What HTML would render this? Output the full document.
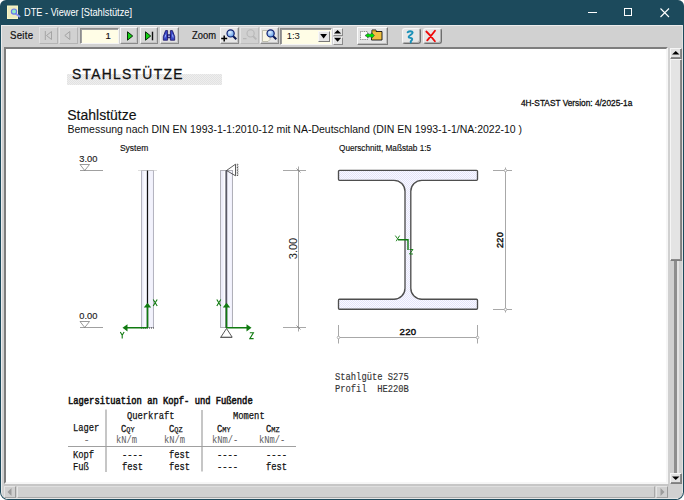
<!DOCTYPE html>
<html><head><meta charset="utf-8">
<style>
*{box-sizing:border-box}
html,body{margin:0;padding:0;width:684px;height:500px;overflow:hidden;background:#fff}
body{position:relative;font-family:"Liberation Sans",sans-serif}
.a{position:absolute}
.t{position:absolute;white-space:nowrap;line-height:1}
#win{position:absolute;left:0;top:0;width:684px;height:500px;background:#1c4a5c;border-radius:6px 6px 8px 8px;overflow:hidden}
.btn{position:absolute;background:#d6d6d6;border:1px solid;border-color:#f6f6f6 #8a8a8a #8a8a8a #f6f6f6;box-shadow:inset -1px -1px 0 #c4c4c4}
</style></head><body>
<div id="win">
<svg class="a" style="left:6px;top:5px" width="16" height="15" viewBox="0 0 16 15">
<rect x="1.5" y="1" width="10" height="12.5" fill="#ecebc0" stroke="#fbf7c4" stroke-width="1"/>
<line x1="9.5" y1="8.5" x2="13.5" y2="11.5" stroke="#8a96f4" stroke-width="2" stroke-linecap="round"/>
<circle cx="8" cy="6.6" r="2.6" fill="#90ecc8" stroke="#6a78ea" stroke-width="1.2"/>
</svg>
<div class="t" style="left:23.89px;top:8.27px;font-family:'Liberation Sans',sans-serif;font-size:10.2px;font-weight:normal;color:#fff;transform-origin:0 0;transform:scaleX(0.9050);">DTE - Viewer [Stahlstütze]</div>
<div class="a" style="left:588px;top:12px;width:9px;height:1px;background:#fff"></div>
<div class="a" style="left:624px;top:8px;width:8px;height:8px;border:1px solid #fff"></div>
<svg class="a" style="left:660px;top:8px" width="10" height="10" viewBox="0 0 10 10"><path d="M0.5 0.5L9 9M9 0.5L0.5 9" stroke="#fff" stroke-width="1.1"/></svg>
<div class="a" style="left:1px;top:25px;width:682px;height:474px;background:#d1d1d1;border-radius:0 0 7px 7px;border-top:1px solid #ececec;border-left:1px solid #ececec"></div>
<div class="t" style="left:10.19px;top:31.17px;font-family:'Liberation Sans',sans-serif;font-size:10.2px;font-weight:normal;color:#111;transform-origin:0 0;transform:scaleX(0.9500);letter-spacing:0.25px;-webkit-text-stroke:0.2px #111;">Seite</div>
<div class="btn" style="left:39px;top:27px;width:19px;height:17px;background:#d1d1d1;border-color:#e2e2e2 #b4b4b4 #b4b4b4 #e2e2e2;box-shadow:none"></div>
<div class="btn" style="left:59px;top:27px;width:19px;height:17px;background:#d1d1d1;border-color:#e2e2e2 #b4b4b4 #b4b4b4 #e2e2e2;box-shadow:none"></div>
<svg class="a" style="left:39px;top:27px" width="40" height="17"><path d="M6.3 4v9M12.5 4.5v8l-5-4z" fill="none" stroke="#a4a4a4" stroke-width="1"/><path d="M30.8 4.5v8l-5-4z" fill="none" stroke="#a4a4a4" stroke-width="1"/></svg>
<div class="a" style="left:80px;top:28px;width:39px;height:16px;background:#fffde6;border:1px solid;border-color:#8c8c8c #f4f4f4 #f4f4f4 #8c8c8c;box-shadow:inset 1px 1px 0 #a0a0a0"></div>
<div class="t" style="left:105.53px;top:30.56px;font-family:'Liberation Sans',sans-serif;font-size:9.5px;font-weight:normal;color:#111;-webkit-text-stroke:0.15px #111;">1</div>
<div class="btn" style="left:120px;top:27px;width:18px;height:17px"></div>
<div class="btn" style="left:140px;top:27px;width:18px;height:17px"></div>
<div class="btn" style="left:160px;top:27px;width:19px;height:17px;background:#e2e2e2"></div>
<svg class="a" style="left:120px;top:27px" width="60" height="17"><path d="M7.5 4.8v8.4l5.2-4.2z" fill="#10d010" stroke="#0a2a0a" stroke-width="1"/><path d="M25.5 4.8v8.4l5.2-4.2z" fill="#10d010" stroke="#0a2a0a" stroke-width="1"/><rect x="31.8" y="4.7" width="1.4" height="8.6" fill="#111"/><g stroke="#1a1060" stroke-width="0.8" stroke-linejoin="round"><path d="M43.3 13.2V9.6L45.6 3.6H47.6V13.2Z" fill="#3a48c8"/><path d="M50.4 13.2V3.6H52.4L54.7 9.6V13.2Z" fill="#3a48c8"/><path d="M47.6 7.8H50.4V10.8H47.6Z" fill="#2a30a0"/></g><path d="M45 10.5l0.8-3M52.5 7.5l0.6 3" stroke="#a8c0ff" stroke-width="0.9"/><circle cx="49" cy="9.3" r="0.7" fill="#fff"/></svg>
<div class="t" style="left:191.69px;top:30.67px;font-family:'Liberation Sans',sans-serif;font-size:10.2px;font-weight:normal;color:#111;transform-origin:0 0;transform:scaleX(0.9200);-webkit-text-stroke:0.2px #111;">Zoom</div>
<div class="btn" style="left:220px;top:27px;width:19px;height:17px;background:#e6e6e6"></div>
<div class="btn" style="left:260px;top:27px;width:19px;height:17px;background:#e6e6e6"></div>
<div class="btn" style="left:240px;top:27px;width:19px;height:17px;background:#d0d0d0;border-color:#e2e2e2 #bcbcbc #bcbcbc #e2e2e2;box-shadow:none"></div>
<svg class="a" style="left:220px;top:27px" width="60" height="17"><defs><radialGradient id="lens" cx="0.4" cy="0.35" r="0.7"><stop offset="0" stop-color="#e0f0ff"/><stop offset="1" stop-color="#5a9ae8"/></radialGradient></defs><path d="M1.2 11.6h6M4.2 8.6v6" stroke="#000" stroke-width="1.5"/><line x1="13" y1="9" x2="16.3" y2="12.3" stroke="#0a1850" stroke-width="2"/><circle cx="10.6" cy="6.4" r="3.6" fill="url(#lens)" stroke="#102070" stroke-width="1.2"/><path d="M23 11.6h3.5" stroke="#b8b8b8" stroke-width="1.2"/><line x1="33" y1="9" x2="36.3" y2="12.3" stroke="#b8b8b8" stroke-width="1.8"/><circle cx="30.6" cy="6.4" r="3.6" fill="none" stroke="#b8b8b8" stroke-width="1.1"/><path d="M42.5 3.5h7.5v9l-2 2h-5.5z" fill="#f8f6e4" stroke="#b0b0a0" stroke-width="0.8"/><line x1="53" y1="9" x2="56.3" y2="12.3" stroke="#0a1850" stroke-width="2"/><circle cx="50.6" cy="6.4" r="3.6" fill="url(#lens)" stroke="#102070" stroke-width="1.2"/></svg>
<div class="a" style="left:280px;top:28px;width:52px;height:17px;background:#fffde6;border:1px solid;border-color:#8a8a8a #f4f4f4 #f4f4f4 #8a8a8a;box-shadow:inset 1px 1px 0 #9a9a9a"></div>
<div class="t" style="left:286.63px;top:31.36px;font-family:'Liberation Sans',sans-serif;font-size:9.5px;font-weight:normal;color:#111;">1:3</div>
<div class="btn" style="left:318px;top:31px;width:12px;height:11px;background:#e6e6e6;border-color:#f8f8f8 #7a7a7a #7a7a7a #f8f8f8;box-shadow:none"></div>
<svg class="a" style="left:318px;top:31px" width="12" height="11"><path d="M2.2 3h6.8l-3.4 4.4z" fill="#000"/></svg>
<div class="btn" style="left:333px;top:28px;width:10px;height:8px;background:#e4e4e4;border-color:#f8f8f8 #8a8a8a #8a8a8a #f8f8f8;box-shadow:none"></div>
<div class="btn" style="left:333px;top:36.5px;width:10px;height:8px;background:#e4e4e4;border-color:#f8f8f8 #8a8a8a #8a8a8a #f8f8f8;box-shadow:none"></div>
<svg class="a" style="left:332px;top:28px" width="12" height="17"><path d="M2 5.6h7.2l-3.6-3.6z M2 9.8h7.2l-3.6 4z" fill="#000"/></svg>
<div class="btn" style="left:357px;top:27px;width:31px;height:17.5px;background:#e4e4e4;border-color:#fafafa #7a7a7a #7a7a7a #fafafa;box-shadow:inset -1px -1px 0 #bdbdbd"></div>
<svg class="a" style="left:357px;top:27px" width="31" height="18"><rect x="3.5" y="4.5" width="7" height="8" fill="#fbfbfb" stroke="#555" stroke-width="0.7" stroke-dasharray="1,0.8"/><path d="M15 3h4v1.5h6v8.5h-10.5z" fill="#f0c040" stroke="#111" stroke-width="0.9"/><path d="M15.2 3.2h3.6v1.2h-3.6z" fill="#a08020"/><path d="M8 8.5l3-2 2 1 2-1.5 2.5 2.5-2.5 2.5-2-1.5-2 1-3-2z" fill="#00e000" stroke="#302050" stroke-width="0.5"/></svg>
<div class="btn" style="left:402px;top:27.5px;width:18.5px;height:16px;border-radius:3px;background:#e6e6e6;border-color:#f6f6f6 #6e6e6e #6e6e6e #f6f6f6;box-shadow:inset -1px -1px 0 #b0b0b0"></div>
<div class="btn" style="left:423px;top:27.5px;width:18.5px;height:16px;border-radius:3px;background:#e6e6e6;border-color:#f6f6f6 #6e6e6e #6e6e6e #f6f6f6;box-shadow:inset -1px -1px 0 #b0b0b0"></div>
<svg class="a" style="left:398px;top:25px" width="46" height="21"><path d="M9.6 7.2c1.5-1.2 4.5-1.4 5 0.2s-4 3.3-4 4.6 3.8 0.4 3.6 2.2-2.2 1.7-1.4 3.3" fill="none" stroke="#1a90b8" stroke-width="1.9" stroke-linecap="round"/><path d="M28.3 6.5c3 2.8 6 6.2 8.6 9.8M37 5.8c-2.6 3.5-5.8 7.2-7.8 9.6" fill="none" stroke="#f00808" stroke-width="1.8" stroke-linecap="round"/></svg>
<div class="a" style="left:4px;top:47px;width:664px;height:437px;background:#fff;border:2px solid;border-color:#7e7e7e #f6f6f6 #f6f6f6 #7e7e7e"></div>
<div class="a" style="left:668px;top:47px;width:14px;height:437px;background:#d0d0d0"></div>
<div class="a" style="left:674px;top:260px;width:3px;height:213px;background:#8e8e8e"></div>
<div class="a" style="left:677px;top:260px;width:2px;height:213px;background:#e4e4e4"></div>
<div class="btn" style="left:669.5px;top:48px;width:12.5px;height:11px;background:#e2e2e2;border-color:#f6f6f6 #7e7e7e #7e7e7e #f6f6f6;box-shadow:inset -1px -1px 0 #8a8a8a"></div>
<div class="btn" style="left:669.5px;top:59px;width:12.5px;height:202px;background:#e4e4e4;border-color:#f6f6f6 #7e7e7e #7e7e7e #f6f6f6;box-shadow:inset -1px -1px 0 #8a8a8a"></div>
<div class="btn" style="left:669.5px;top:473px;width:12.5px;height:11px;background:#e2e2e2;border-color:#f6f6f6 #7e7e7e #7e7e7e #f6f6f6;box-shadow:inset -1px -1px 0 #8a8a8a"></div>
<svg class="a" style="left:670px;top:48px" width="12" height="11"><path d="M2 6.5h7.5l-3.75-3.5z" fill="#000"/></svg>
<svg class="a" style="left:670px;top:473px" width="12" height="11"><path d="M2 3.5h7.5l-3.75 3.5z" fill="#000"/></svg>
<div class="a" style="left:682px;top:25px;width:1px;height:468px;background:#e2e2e2"></div>
<div class="a" style="left:6px;top:498px;width:672px;height:1px;background:#e6e6e6"></div>
<div class="a" style="left:4px;top:484px;width:665px;height:14px;background:#d0d0d0"></div>
<div class="a" style="left:4px;top:484px;width:665px;height:2px;background:#c6c6c6"></div>
<div class="btn" style="left:4px;top:486px;width:12px;height:12px;background:#d0d0d0;border-color:#e4e4e4 #9a9a9a #a4a4a4 #e4e4e4;box-shadow:none"></div>
<div class="btn" style="left:17px;top:486px;width:638px;height:12px;background:#d0d0d0;border-color:#dedede #a8a8a8 #a8a8a8 #e6e6e6;box-shadow:none"></div>
<div class="btn" style="left:656px;top:486px;width:12px;height:12px;background:#d0d0d0;border-color:#e4e4e4 #9a9a9a #a4a4a4 #e4e4e4;box-shadow:none"></div>
<svg class="a" style="left:4px;top:486px" width="12" height="12"><path d="M3.5 6l4-4v8z" fill="#9c9c9c"/></svg>
<svg class="a" style="left:656px;top:486px" width="12" height="12"><path d="M8.5 6l-4-4v8z" fill="#9c9c9c"/></svg>
<svg class="a" style="left:0;top:0" width="684" height="500" viewBox="0 0 684 500"><defs><pattern id="dith" width="2" height="2" patternUnits="userSpaceOnUse"><rect width="2" height="2" fill="#fafaff"/><rect width="1" height="1" fill="#e4e4fa"/><rect x="1" y="1" width="1" height="1" fill="#e4e4fa"/></pattern><pattern id="gdith" width="2" height="2" patternUnits="userSpaceOnUse"><rect width="2" height="2" fill="#eeeeee"/><rect width="1" height="1" fill="#e2e2e2"/><rect x="1" y="1" width="1" height="1" fill="#e2e2e2"/></pattern></defs><rect x="67" y="74" width="155" height="11" fill="url(#gdith)"/><line x1="80" y1="170.5" x2="103" y2="170.5" stroke="#a0a0a0" stroke-width="1"/><path d="M80 164.5h9.5l-4.75 6z" fill="none" stroke="#707070" stroke-width="0.7"/><line x1="80" y1="327.5" x2="103" y2="327.5" stroke="#a0a0a0" stroke-width="1"/><path d="M80 321.5h9.5l-4.75 6z" fill="none" stroke="#707070" stroke-width="0.7"/><rect x="141.5" y="170.5" width="12" height="157" fill="#ebebf8" stroke="#b4b4c0" stroke-width="1"/><rect x="143.6" y="171" width="2.4" height="156" fill="#fafaff"/><rect x="148.2" y="171" width="4.5" height="156" fill="#f2f2fc"/><line x1="147.5" y1="170" x2="147.5" y2="328" stroke="#111" stroke-width="1.2"/><line x1="138" y1="170.5" x2="157" y2="170.5" stroke="#c8c8c8" stroke-width="0.6"/><line x1="141" y1="328" x2="154" y2="328" stroke="#333" stroke-width="1" stroke-dasharray="1,1"/><rect x="220.5" y="170.5" width="12" height="157" fill="#ededfa" stroke="#b0b0b8" stroke-width="1"/><rect x="223.6" y="171" width="1.6" height="156" fill="#fcfcff"/><rect x="228" y="171" width="3.5" height="156" fill="#f4f4fd"/><line x1="226.3" y1="170.5" x2="226.3" y2="328" stroke="#5a5a66" stroke-width="1.8"/><path d="M226.5 170.5L235.5 164.2V175.8z" fill="none" stroke="#333" stroke-width="0.8"/><line x1="237.3" y1="163.8" x2="237.3" y2="176.2" stroke="#333" stroke-width="1" stroke-dasharray="1,0.6"/><line x1="238.3" y1="164.3" x2="238.3" y2="176" stroke="#999" stroke-width="0.8" stroke-dasharray="0.8,0.9"/><path d="M226.5 328.5L220.8 337.2H232.2z" fill="#fff" stroke="#444" stroke-width="0.9"/><line x1="220.5" y1="337.5" x2="232.5" y2="337.5" stroke="#333" stroke-width="1" stroke-dasharray="1,1"/><line x1="147.5" y1="328" x2="147.5" y2="306" stroke="#107a10" stroke-width="1.6"/><path d="M143.8 307.5L147.5 302.8L151.2 307.5z" fill="#107a10"/><line x1="147.5" y1="327.8" x2="126" y2="327.8" stroke="#107a10" stroke-width="1.6"/><path d="M127.5 324.2L122.5 327.8L127.5 331.4z" fill="#107a10"/><line x1="226.5" y1="328" x2="226.5" y2="306" stroke="#107a10" stroke-width="1.6"/><path d="M222.8 307.5L226.5 302.8L230.2 307.5z" fill="#107a10"/><line x1="226.5" y1="327.8" x2="248" y2="327.8" stroke="#107a10" stroke-width="1.6"/><path d="M246.5 324.2L251.5 327.8L246.5 331.4z" fill="#107a10"/><path d="M153.2 299.5L157.2 306M157.2 299.5L153.2 306" stroke="#107a10" stroke-width="1.1" fill="none"/><path d="M120.3 332L122.2 335.2L124.1 332M122.2 335.2V338.5" stroke="#107a10" stroke-width="1.1" fill="none"/><path d="M216.8 299.5L220.8 306M220.8 299.5L216.8 306" stroke="#107a10" stroke-width="1.1" fill="none"/><path d="M249.8 332.8H253.4L249.8 338.6H253.6" stroke="#107a10" stroke-width="1.1" fill="none"/><line x1="298.5" y1="166.5" x2="298.5" y2="331.5" stroke="#a8a8a8" stroke-width="1"/><line x1="283" y1="170.5" x2="306" y2="170.5" stroke="#a8a8a8" stroke-width="1"/><line x1="283" y1="327.5" x2="306" y2="327.5" stroke="#a8a8a8" stroke-width="1"/><path d="M296.5 168.5l4 4M296.5 325.5l4 4" stroke="#777" stroke-width="0.8"/><path d="M339.5 170.3 H476.5 Q477.5 170.3 477.5 171.3 V179.3 Q477.5 180.3 476.5 180.3 H421.8 A11 11 0 0 0 410.8 191.3 V288.2 A11 11 0 0 0 421.8 299.2 H476.5 Q477.5 299.2 477.5 300.2 V308.2 Q477.5 309.2 476.5 309.2 H339.5 Q338.5 309.2 338.5 308.2 V300.2 Q338.5 299.2 339.5 299.2 H394 A11 11 0 0 0 405 288.2 V191.3 A11 11 0 0 0 394 180.3 H339.5 Q338.5 180.3 338.5 179.3 V171.3 Q338.5 170.3 339.5 170.3Z" fill="url(#dith)" stroke="#4e4e4e" stroke-width="1.35"/><path d="M398 239.7H408V250" fill="none" stroke="#107a10" stroke-width="1.4"/><path d="M395.3 235.6L397.6 238.8M399.6 235.6L396.2 241.2" stroke="#107a10" stroke-width="0.9" fill="none"/><path d="M409.5 249.5H413L409.5 254H413" stroke="#107a10" stroke-width="0.9" fill="none"/><line x1="505.5" y1="167.5" x2="505.5" y2="312.5" stroke="#a8a8a8" stroke-width="1"/><line x1="493" y1="170.5" x2="512" y2="170.5" stroke="#a8a8a8" stroke-width="1"/><line x1="493" y1="309.5" x2="512" y2="309.5" stroke="#a8a8a8" stroke-width="1"/><circle cx="505.5" cy="170.5" r="1.3" fill="#fff" stroke="#999" stroke-width="0.7"/><circle cx="505.5" cy="309.5" r="1.3" fill="#fff" stroke="#999" stroke-width="0.7"/><line x1="338.5" y1="337.5" x2="477.5" y2="337.5" stroke="#a8a8a8" stroke-width="1"/><line x1="338.5" y1="325" x2="338.5" y2="343.5" stroke="#a8a8a8" stroke-width="1"/><line x1="477.5" y1="325" x2="477.5" y2="343.5" stroke="#a8a8a8" stroke-width="1"/><circle cx="338.5" cy="337.5" r="1.3" fill="#fff" stroke="#999" stroke-width="0.7"/><circle cx="477.5" cy="337.5" r="1.3" fill="#fff" stroke="#999" stroke-width="0.7"/><line x1="106" y1="409.5" x2="106" y2="472" stroke="#a8a8a8" stroke-width="1.3"/><line x1="202" y1="410" x2="202" y2="471.5" stroke="#a8a8a8" stroke-width="1.3"/><line x1="68" y1="446.5" x2="296" y2="446.5" stroke="#a0a0a0" stroke-width="1.2"/></svg>
<div class="t" style="left:72.42px;top:67.15px;font-family:'Liberation Sans',sans-serif;font-size:14px;font-weight:normal;color:#111;transform-origin:0 0;transform:scaleX(0.9850);letter-spacing:1.35px;-webkit-text-stroke:0.3px #111;">STAHLSTÜTZE</div>
<div class="t" style="left:67.22px;top:107.75px;font-family:'Liberation Sans',sans-serif;font-size:14px;font-weight:normal;color:#111;-webkit-text-stroke:0.15px #111;">Stahlstütze</div>
<div class="t" style="left:67.47px;top:123.71px;font-family:'Liberation Sans',sans-serif;font-size:10.5px;font-weight:normal;color:#111;">Bemessung nach DIN EN 1993-1-1:2010-12 mit NA-Deutschland (DIN EN 1993-1-1/NA:2022-10 )</div>
<div class="t" style="left:521.30px;top:98.52px;font-family:'Liberation Sans',sans-serif;font-size:8.6px;font-weight:normal;color:#111;transform-origin:0 0;transform:scaleX(0.9650);-webkit-text-stroke:0.3px #111;">4H-STAST Version: 4/2025-1a</div>
<div class="t" style="left:119.91px;top:144.20px;font-family:'Liberation Sans',sans-serif;font-size:8.5px;font-weight:normal;color:#111;-webkit-text-stroke:0.15px #111;">System</div>
<div class="t" style="left:339.00px;top:144.10px;font-family:'Liberation Sans',sans-serif;font-size:8.5px;font-weight:normal;color:#111;transform-origin:0 0;transform:scaleX(0.9650);-webkit-text-stroke:0.15px #111;">Querschnitt, Maßstab 1:5</div>
<div class="t" style="left:79.35px;top:154.73px;font-family:'Liberation Sans',sans-serif;font-size:9.3px;font-weight:normal;color:#222;-webkit-text-stroke:0.15px #222;">3.00</div>
<div class="t" style="left:79.35px;top:311.73px;font-family:'Liberation Sans',sans-serif;font-size:9.3px;font-weight:normal;color:#222;-webkit-text-stroke:0.15px #222;">0.00</div>
<div class="t" style="left:281px;top:243px;font-size:11px;color:#222;transform:rotate(-90deg);transform-origin:50% 50%;width:24px;height:11px;text-align:center">3.00</div>
<div class="t" style="left:489.6px;top:235.2px;font-size:9.2px;color:#111;-webkit-text-stroke:0.45px #111;letter-spacing:0.2px;transform:rotate(-90deg);transform-origin:50% 50%;width:22px;height:10px;text-align:center">220</div>
<div class="t" style="left:399.53px;top:327.47px;font-family:'Liberation Sans',sans-serif;font-size:9.6px;font-weight:normal;color:#111;letter-spacing:0.3px;-webkit-text-stroke:0.45px #111;">220</div>
<div class="t" style="left:334.60px;top:371.73px;font-family:'Liberation Mono',monospace;font-size:10.4px;font-weight:normal;color:#333;transform-origin:0 0;transform:scaleX(0.8462);-webkit-text-stroke:0.15px #333;">Stahlgüte S275</div>
<div class="t" style="left:334.60px;top:384.03px;font-family:'Liberation Mono',monospace;font-size:10.4px;font-weight:normal;color:#333;transform-origin:0 0;transform:scaleX(0.8462);-webkit-text-stroke:0.15px #333;">Profil&nbsp; HE220B</div>
<div class="t" style="left:68.30px;top:395.93px;font-family:'Liberation Mono',monospace;font-size:10.4px;font-weight:normal;color:#111;transform-origin:0 0;transform:scaleX(0.8462);-webkit-text-stroke:0.55px #111;">Lagersituation an Kopf- und Fußende</div>
<div class="t" style="left:126.60px;top:410.53px;font-family:'Liberation Mono',monospace;font-size:10.4px;font-weight:normal;color:#111;transform-origin:0 0;transform:scaleX(0.8462);-webkit-text-stroke:0.25px #111;">Querkraft</div>
<div class="t" style="left:232.90px;top:410.93px;font-family:'Liberation Mono',monospace;font-size:10.4px;font-weight:normal;color:#111;transform-origin:0 0;transform:scaleX(0.8462);-webkit-text-stroke:0.25px #111;">Moment</div>
<div class="t" style="left:73.20px;top:423.03px;font-family:'Liberation Mono',monospace;font-size:10.4px;font-weight:normal;color:#111;transform-origin:0 0;transform:scaleX(0.8462);-webkit-text-stroke:0.25px #111;">Lager</div>
<div class="t" style="left:121.4px;top:423.63px;font-family:'Liberation Mono',monospace;font-size:10.4px;color:#111;-webkit-text-stroke:0.3px #111;transform-origin:0 0;transform:scaleX(0.8462)">C<span style="font-size:8.11px;letter-spacing:0px;-webkit-text-stroke:0.25px #111">QY</span></div>
<div class="t" style="left:169.3px;top:423.63px;font-family:'Liberation Mono',monospace;font-size:10.4px;color:#111;-webkit-text-stroke:0.3px #111;transform-origin:0 0;transform:scaleX(0.8462)">C<span style="font-size:8.11px;letter-spacing:0px;-webkit-text-stroke:0.25px #111">QZ</span></div>
<div class="t" style="left:217.2px;top:423.63px;font-family:'Liberation Mono',monospace;font-size:10.4px;color:#111;-webkit-text-stroke:0.3px #111;transform-origin:0 0;transform:scaleX(0.8462)">C<span style="font-size:8.11px;letter-spacing:0px;-webkit-text-stroke:0.25px #111">MY</span></div>
<div class="t" style="left:265.7px;top:423.63px;font-family:'Liberation Mono',monospace;font-size:10.4px;color:#111;-webkit-text-stroke:0.3px #111;transform-origin:0 0;transform:scaleX(0.8462)">C<span style="font-size:8.11px;letter-spacing:0px;-webkit-text-stroke:0.25px #111">MZ</span></div>
<div class="t" style="left:84.30px;top:434.73px;font-family:'Liberation Mono',monospace;font-size:10.4px;font-weight:normal;color:#777;transform-origin:0 0;transform:scaleX(0.8462);-webkit-text-stroke:0.25px #777;">-</div>
<div class="t" style="left:115.60px;top:434.73px;font-family:'Liberation Mono',monospace;font-size:10.4px;font-weight:normal;color:#606060;transform-origin:0 0;transform:scaleX(0.8462);-webkit-text-stroke:0px #606060;">kN/m</div>
<div class="t" style="left:163.70px;top:434.73px;font-family:'Liberation Mono',monospace;font-size:10.4px;font-weight:normal;color:#606060;transform-origin:0 0;transform:scaleX(0.8462);-webkit-text-stroke:0px #606060;">kN/m</div>
<div class="t" style="left:211.70px;top:434.73px;font-family:'Liberation Mono',monospace;font-size:10.4px;font-weight:normal;color:#606060;transform-origin:0 0;transform:scaleX(0.8462);-webkit-text-stroke:0px #606060;">kNm/-</div>
<div class="t" style="left:259.30px;top:434.73px;font-family:'Liberation Mono',monospace;font-size:10.4px;font-weight:normal;color:#606060;transform-origin:0 0;transform:scaleX(0.8462);-webkit-text-stroke:0px #606060;">kNm/-</div>
<div class="t" style="left:72.80px;top:450.03px;font-family:'Liberation Mono',monospace;font-size:10.4px;font-weight:normal;color:#111;transform-origin:0 0;transform:scaleX(0.8462);-webkit-text-stroke:0.25px #111;">Kopf</div>
<div class="t" style="left:72.80px;top:461.73px;font-family:'Liberation Mono',monospace;font-size:10.4px;font-weight:normal;color:#111;transform-origin:0 0;transform:scaleX(0.8462);-webkit-text-stroke:0.25px #111;">Fuß</div>
<div class="t" style="left:121.90px;top:450.03px;font-family:'Liberation Mono',monospace;font-size:10.4px;font-weight:normal;color:#111;transform-origin:0 0;transform:scaleX(0.8462);-webkit-text-stroke:0.25px #111;">----</div>
<div class="t" style="left:121.90px;top:461.73px;font-family:'Liberation Mono',monospace;font-size:10.4px;font-weight:normal;color:#111;transform-origin:0 0;transform:scaleX(0.8462);-webkit-text-stroke:0.25px #111;">fest</div>
<div class="t" style="left:169.30px;top:450.03px;font-family:'Liberation Mono',monospace;font-size:10.4px;font-weight:normal;color:#111;transform-origin:0 0;transform:scaleX(0.8462);-webkit-text-stroke:0.25px #111;">fest</div>
<div class="t" style="left:169.30px;top:461.73px;font-family:'Liberation Mono',monospace;font-size:10.4px;font-weight:normal;color:#111;transform-origin:0 0;transform:scaleX(0.8462);-webkit-text-stroke:0.25px #111;">fest</div>
<div class="t" style="left:217.30px;top:450.03px;font-family:'Liberation Mono',monospace;font-size:10.4px;font-weight:normal;color:#111;transform-origin:0 0;transform:scaleX(0.8462);-webkit-text-stroke:0.25px #111;">----</div>
<div class="t" style="left:217.30px;top:461.73px;font-family:'Liberation Mono',monospace;font-size:10.4px;font-weight:normal;color:#111;transform-origin:0 0;transform:scaleX(0.8462);-webkit-text-stroke:0.25px #111;">----</div>
<div class="t" style="left:265.70px;top:450.03px;font-family:'Liberation Mono',monospace;font-size:10.4px;font-weight:normal;color:#111;transform-origin:0 0;transform:scaleX(0.8462);-webkit-text-stroke:0.25px #111;">----</div>
<div class="t" style="left:265.70px;top:461.73px;font-family:'Liberation Mono',monospace;font-size:10.4px;font-weight:normal;color:#111;transform-origin:0 0;transform:scaleX(0.8462);-webkit-text-stroke:0.25px #111;">fest</div>
</div>
</body></html>
